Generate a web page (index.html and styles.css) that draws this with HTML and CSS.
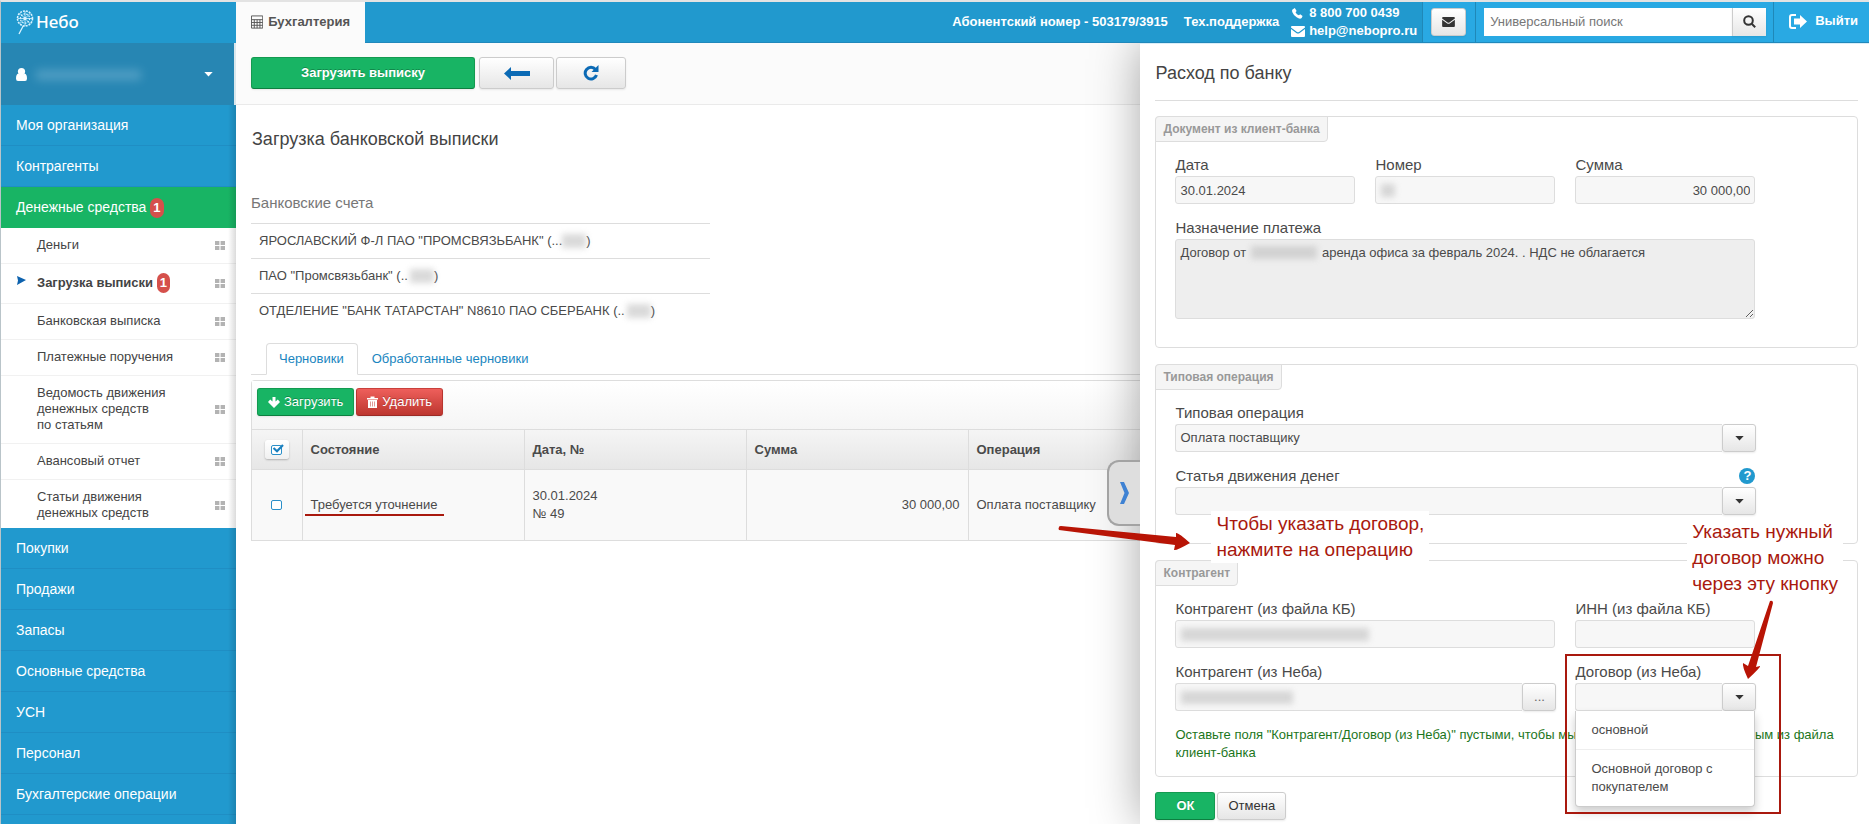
FILE: index.html
```html
<!DOCTYPE html>
<html lang="ru">
<head>
<meta charset="utf-8">
<title>Небо — Загрузка банковской выписки</title>
<link rel="stylesheet" href="styles.css">
</head>
<body>
<svg class="defs" aria-hidden="true">
  <symbol id="grid" viewBox="0 0 10 9"><path d="M0 0h4.4v4H0zM5.6 0H10v4H5.6zM0 5h4.4v4H0zM5.6 5H10v4H5.6z" fill="#b3b3b3"/></symbol>
  <symbol id="mail" viewBox="0 0 14 11"><path d="M0 1Q0 0 1 0h12q1 0 1 1v.6L8 6q-1 .7-2 0L0 1.600z M0 3l5.300 4q1.700 1.100 3.400 0L14 3v7q0 1-1 1H1q-1 0-1-1z" fill="currentColor"/></symbol>
  <symbol id="caret" viewBox="0 0 10 6"><path d="M0 0h10L5 5.500z" fill="currentColor"/></symbol>
</svg>

<header class="topbar">
  <a class="logo" href="#">
    <svg width="18" height="25" viewBox="0 0 18 25" fill="none" stroke="#d8f2ff">
      <circle cx="9" cy="8.500" r="7.500" stroke-width="1.600" stroke-dasharray="2 1"/>
      <circle cx="9" cy="8.500" r="4.600" stroke-width="1.200" stroke-dasharray="1.600 1.200"/>
      <path d="M9 1v15M1.500 8.500h15M3.700 3.200l10.600 10.600M14.300 3.200L3.700 13.800" stroke-width=".8"/>
      <circle cx="9" cy="8.500" r="1.200" fill="#d8f2ff"/>
      <path d="M7.500 15.500Q5 20 3 24" stroke-width="1.300"/>
    </svg>
    <span>Небо</span>
  </a>
  <a class="app-tab" href="#">
    <svg width="13" height="14" viewBox="0 0 13 14" fill="none" stroke="#555"><path d="M.5.5h12v13H.5zM.5 4.500h12M.5 7.500h12M.5 10.500h12M3.500 4.500v9M6.500 4.500v9M9.500 4.500v9"/></svg>
    Бухгалтерия
  </a>
  <div class="contacts">
    <span>Абонентский номер - 503179/3915</span>
    <span>Тех.поддержка</span>
    <div class="support">
      <svg width="14" height="11" viewBox="0 0 14 12"><path d="M1 1.500L3.500 0l2 3.200L4.300 4.500Q5.500 7 8 8l1.400-1.300L12 8.800 11 11q-2 1.500-5.500-.8T1 5Q0 3 1 1.500z" fill="currentColor"/></svg>
      <span>8 800 700 0439</span>
      <svg width="14" height="11"><use href="#mail"/></svg>
      <a href="#">help@nebopro.ru</a>
    </div>
  </div>
  <div class="bar-cell"><button class="btn mail-btn" aria-label="Сообщения"><svg width="14" height="10"><use href="#mail"/></svg></button></div>
  <form class="bar-cell search">
    <input type="search" placeholder="Универсальный поиск" aria-label="Универсальный поиск">
    <button type="button" class="btn" aria-label="Найти"><svg width="13" height="13" viewBox="0 0 13 13" fill="none" stroke="#333" stroke-width="2"><circle cx="5.500" cy="5.500" r="4.300"/><path d="M8.700 8.700l3.500 3.500"/></svg></button>
  </form>
  <a class="bar-cell exit" href="#">
    <svg width="18" height="15" viewBox="0 0 18 15"><path d="M7 1H3Q1 1 1 3v9q0 2 2 2h4" fill="none" stroke="currentColor" stroke-width="2"/><path d="M5 4.500h6V1l7 6.500-7 6.500v-3.500H5z" fill="currentColor"/></svg>
    Выйти
  </a>
</header>

<div class="layout">
  <nav class="sidebar">
    <button class="user">
      <svg width="11" height="13" viewBox="0 0 11 13" fill="#fff"><circle cx="5.500" cy="3.600" r="3.600"/><path d="M0 10.500Q0 6 2.500 5.500q3 2.400 6 0Q11 6 11 10.500 11 13 9 13H2Q0 13 0 10.500z"/></svg>
      <span class="user-name"></span>
      <svg width="9" height="5"><use href="#caret"/></svg>
    </button>
    <a href="#">Моя организация</a>
    <a href="#">Контрагенты</a>
    <a href="#" class="active">Денежные средства <b class="count">1</b></a>
    <ul>
      <li><a href="#">Деньги</a><svg width="10" height="9"><use href="#grid"/></svg></li>
      <li class="current"><svg class="pointer" width="9" height="9" viewBox="0 0 9 9"><path d="M0 0l9 4-9 5 1-4.500z" fill="#0d62ae"/></svg><a href="#">Загрузка выписки <b class="count">1</b></a><svg width="10" height="9"><use href="#grid"/></svg></li>
      <li><a href="#">Банковская выписка</a><svg width="10" height="9"><use href="#grid"/></svg></li>
      <li><a href="#">Платежные поручения</a><svg width="10" height="9"><use href="#grid"/></svg></li>
      <li><a href="#">Ведомость движения<br>денежных средств<br>по статьям</a><svg width="10" height="9"><use href="#grid"/></svg></li>
      <li><a href="#">Авансовый отчет</a><svg width="10" height="9"><use href="#grid"/></svg></li>
      <li><a href="#">Статьи движения<br>денежных средств</a><svg width="10" height="9"><use href="#grid"/></svg></li>
    </ul>
    <a href="#">Покупки</a>
    <a href="#">Продажи</a>
    <a href="#">Запасы</a>
    <a href="#">Основные средства</a>
    <a href="#">УСН</a>
    <a href="#">Персонал</a>
    <a href="#">Бухгалтерские операции</a>
  </nav>

  <main>
    <div class="toolbar">
      <button class="btn green load">Загрузить выписку</button>
      <button class="btn back" aria-label="Назад"><svg width="26" height="13" viewBox="0 0 26 13"><path d="M0 6.500L7 0v4h19v5H7v4z" fill="#0b6ab5"/></svg></button>
      <button class="btn reload" aria-label="Обновить"><svg width="16" height="16" viewBox="0 0 16 16"><path d="M12.500 4.500A5.800 5.800 0 1 0 13.500 10" fill="none" stroke="#0b6ab5" stroke-width="3"/><path d="M15.500 0v7H8.500z" fill="#0b6ab5"/></svg></button>
    </div>
    <div class="content">
      <h1>Загрузка банковской выписки</h1>
      <h2>Банковские счета</h2>
      <ul class="accounts">
        <li>ЯРОСЛАВСКИЙ Ф-Л ПАО "ПРОМСВЯЗЬБАНК" (...<i class="mask"></i>)</li>
        <li>ПАО "Промсвязьбанк" (..<i class="mask"></i>)</li>
        <li>ОТДЕЛЕНИЕ "БАНК ТАТАРСТАН" N8610 ПАО СБЕРБАНК (..<i class="mask"></i>)</li>
      </ul>
      <div class="tabs"><a class="selected" href="#">Черновики</a><a href="#">Обработанные черновики</a></div>
      <div class="grid-box">
        <div class="grid-tools">
          <button class="btn green"><svg width="12" height="11" viewBox="0 0 12 11"><path d="M4.500 0h3v4.500l2.300-2L12 5 6 11 0 5l2.200-2.500 2.300 2z" fill="#fff"/></svg>Загрузить</button>
          <button class="btn red"><svg width="11" height="12" viewBox="0 0 11 12"><path d="M0 2h3.500V.5h4V2H11v1.500H0z" fill="#fff"/><path d="M1 4h9v8H1z" fill="#fff"/><path d="M3.500 5.500v5M5.500 5.500v5M7.500 5.500v5" stroke="#e09a97"/></svg>Удалить</button>
        </div>
        <table>
          <thead><tr><th class="tick"><label class="tick-btn"><input type="checkbox" checked aria-label="Выбрать все"><svg class="check" width="12" height="9" viewBox="0 0 12 9"><path d="M1.500 4L5 7.200 11 1" fill="none" stroke="#1a7fbe" stroke-width="2.200"/></svg></label></th><th>Состояние</th><th>Дата, №</th><th>Сумма</th><th>Операция</th><th class="rest"></th></tr></thead>
          <tbody><tr><td class="tick"><input type="checkbox" aria-label="Выбрать строку"></td><td><span class="underlined">Требуется уточнение</span></td><td>30.01.2024<br>№ 49</td><td class="num">30 000,00</td><td>Оплата поставщику</td><td class="rest"></td></tr></tbody>
        </table>
      </div>
    </div>
  </main>

  <aside class="panel">
    <button class="collapse" aria-label="Свернуть панель"><svg width="9" height="22" viewBox="0 0 9 22"><path d="M0 0h4l5 11-5 11H0l4.500-11z" fill="#3f82d3"/></svg></button>
    <form>
      <h1>Расход по банку</h1>
      <fieldset>
        <legend>Документ из клиент-банка</legend>
        <div class="fields">
          <div class="field"><label for="date">Дата</label><input id="date" value="30.01.2024"></div>
          <div class="field"><label for="num">Номер</label><div class="masked"><input id="num"><i class="mask short"></i></div></div>
          <div class="field"><label for="sum">Сумма</label><input id="sum" class="num" value="30 000,00"></div>
          <div class="field full"><label for="purpose">Назначение платежа</label><div class="masked"><textarea id="purpose">Договор от &nbsp; &nbsp; &nbsp; &nbsp; &nbsp; &nbsp; &nbsp; &nbsp; &nbsp; &nbsp; аренда офиса за февраль 2024. . НДС не облагается</textarea><i class="mask inline"></i></div></div>
        </div>
      </fieldset>
      <fieldset>
        <legend>Типовая операция</legend>
        <div class="fields">
          <div class="field full"><label for="op">Типовая операция</label>
            <div class="combo"><select id="op"><option>Оплата поставщику</option></select><button type="button" class="btn" aria-label="Открыть список"><svg width="9" height="5"><use href="#caret"/></svg></button></div></div>
          <div class="field full"><div class="label-row"><label for="flow">Статья движения денег</label><button type="button" class="help" aria-label="Справка">?</button></div>
            <div class="combo"><select id="flow"><option></option></select><button type="button" class="btn" aria-label="Открыть список"><svg width="9" height="5"><use href="#caret"/></svg></button></div></div>
        </div>
      </fieldset>
      <fieldset class="party">
        <legend>Контрагент</legend>
        <div class="fields">
          <div class="field wide"><label for="p1">Контрагент (из файла КБ)</label><div class="masked"><input id="p1"><i class="mask long"></i></div></div>
          <div class="field"><label for="inn">ИНН (из файла КБ)</label><input id="inn"></div>
          <div class="field wide"><label for="p2">Контрагент (из Неба)</label><div class="combo masked"><input id="p2"><i class="mask medium"></i><button type="button" class="btn dots">...</button></div></div>
          <div class="field contract"><label for="contract">Договор (из Неба)</label>
            <div class="combo"><input id="contract"><button type="button" class="btn" aria-label="Открыть список"><svg width="9" height="5"><use href="#caret"/></svg></button></div>
            <ul class="menu"><li>основной</li><li>Основной договор с покупателем</li></ul>
            <div class="frame"></div>
          </div>
        </div>
        <p class="hint">Оставьте поля "Контрагент/Договор (из Неба)" пустыми, чтобы мы заполнили сведения по данным из файла клиент-банка</p>
      </fieldset>
      <div class="actions"><button type="button" class="btn green ok">ОК</button><button type="button" class="btn">Отмена</button></div>
    </form>
    <p class="note note-operation">Чтобы указать договор,<br>нажмите на операцию</p>
    <p class="note note-contract">Указать нужный<br>договор можно<br>через эту кнопку</p>
    <svg class="arrow arrow-operation" width="133" height="28" viewBox="0 0 133 28" fill="#b81405"><path d="M1 4Q0 6 1 7L117 22l-1 5q2 1 16-7Q120 9 118 10v4L3 3Q1 3 1 4z"/></svg>
    <svg class="arrow arrow-contract" width="36" height="80" viewBox="0 0 36 80" fill="#b81405"><path d="M31 1q3-1 3 2L17 67l4-1q1 1-12 13Q3 66 4 63l5 3z"/></svg>
  </aside>
</div>
</body>
</html>
```

FILE: styles.css
```css
* { box-sizing: border-box; }
body {
  margin: 0;
  height: 100vh;
  display: flex;
  flex-direction: column;
  overflow: hidden;
  border-top: 2px solid #e3e3e3;
  border-left: 1px solid #b9c4c9;
  font: 13px/18px "Liberation Sans", Arial, sans-serif;
  color: #4a4a4a;
  background: #fff;
}
.defs { position: absolute; width: 0; height: 0; }
a { color: inherit; text-decoration: none; }
ul { list-style: none; margin: 0; padding: 0; }
button, input, textarea, select { font: inherit; color: inherit; margin: 0; }
h1, h2, p { margin: 0; font-weight: normal; }
h1 { font-size: 18px; line-height: 22px; color: #444; }

.btn {
  display: inline-flex;
  align-items: center;
  justify-content: center;
  gap: 4px;
  height: 28px;
  padding: 0 10px;
  border: 1px solid #ccc;
  border-radius: 3px;
  background: linear-gradient(#fff, #e6e6e6);
  color: #333;
  box-shadow: 0 1px 2px rgba(0, 0, 0, .08);
}
.btn.green {
  background: #18b464;
  border-color: #149a50 #149a50 #0d7f40;
  color: #fff;
  text-shadow: 0 -1px 0 rgba(0, 0, 0, .25);
}
.btn.red {
  background: linear-gradient(#ee5f5b, #bd362f);
  border-color: #c9403b #b8352f #9b2a25;
  color: #fff;
  text-shadow: 0 -1px 0 rgba(0, 0, 0, .25);
}

.topbar {
  flex: none;
  display: flex;
  height: 41px;
  background: #2199ce;
  color: #fff;
  font-weight: bold;
}
.logo {
  width: 235px;
  display: flex;
  align-items: center;
  gap: 2px;
  padding: 0 0 1px 15px;
  font: 500 17px/24px "Noto Sans", "Open Sans", sans-serif;
}
.app-tab {
  display: flex;
  align-items: center;
  gap: 5px;
  width: 129px;
  padding: 0 15px 2px;
  background: #fbfbfb;
  color: #555;
}
.contacts {
  flex: 1;
  display: flex;
  justify-content: flex-end;
  align-items: center;
  gap: 16px;
  padding-right: 5px;
  border-bottom: 1px solid #2188bb;
}
.support {
  display: grid;
  grid-template-columns: 14px auto;
  column-gap: 4px;
  align-items: center;
  margin-left: -4px;
}
.bar-cell {
  display: flex;
  align-items: center;
  background: #29a9e3;
  border-left: 1px solid #1f88b8;
  border-bottom: 1px solid #2188bb;
  padding: 0 9px 1px 8px;
}
.mail-btn { width: 35px; }
.search { padding: 0 7px 1px 8px; }
.search input {
  width: 248px;
  height: 28px;
  border: 0;
  border-radius: 0;
  background: #fff;
  padding: 0 6px;
  font-weight: normal;
}
.search input::placeholder { color: #777; }
.search .btn { width: 34px; border-radius: 0; border-width: 0 0 0 1px; }
.exit { gap: 8px; padding: 0 11px 2px 15px; }

.layout { flex: 1; display: flex; min-height: 0; position: relative; }

.sidebar {
  flex: none;
  position: relative;
  width: 235px;
  background: #2199ce;
  color: #fff;
  font-size: 14px;
}
.sidebar::after {
  content: "";
  position: absolute;
  inset: 62px 0 0 auto;
  width: 8px;
  background: linear-gradient(to right, transparent, rgba(0, 0, 0, .14));
}
.user {
  display: flex;
  align-items: center;
  width: 100%;
  height: 62px;
  border: 0;
  border-right: 2px solid #dbe7ec;
  padding: 0 21px 0 15px;
  background: #2786b3;
  color: #fff;
}
.user-name {
  width: 105px;
  height: 10px;
  margin: 2px auto 0 9px;
  background: #8fc3dd;
  opacity: .4;
  filter: blur(5px);
}
.sidebar > a {
  display: block;
  height: 41px;
  padding: 0 15px;
  line-height: 40px;
  border-bottom: 1px solid #1f8ec4;
}
.sidebar > .active { background: #18b464; border-color: #18b464; }
.count {
  display: inline-block;
  padding: 0 3px;
  border-radius: 7px;
  background: #d5504b;
  color: #fff;
  font-size: 13px;
  line-height: 20px;
}
.sidebar ul { background: #fff; color: #444; font-size: 13px; line-height: 16px; }
.sidebar li {
  display: flex;
  align-items: center;
  justify-content: space-between;
  position: relative;
  padding: 9px 11px 10px 36px;
  border-bottom: 1px solid #f1f1f1;
}
.sidebar li:last-child { padding-bottom: 7px; border: 0; }
.sidebar .current { font-weight: bold; }
.pointer { position: absolute; left: 16px; top: 12px; }

main { flex: 1; min-width: 0; overflow: hidden; }
.toolbar {
  display: flex;
  gap: 2px;
  padding: 14px 15px 15px;
  background: #fbfbfb;
  border-bottom: 1px solid #eaeaea;
}
.toolbar .btn { height: 32px; }
.load { width: 224px; margin-right: 2px; font-weight: bold; }
.back { width: 75px; }
.reload { width: 70px; }
.content { padding: 23px 0 0 15px; }
.content h2 { margin: 43px 0 10px; font-size: 15px; line-height: 20px; color: #777; }
.content h1 { padding-left: 1px; }
.accounts { width: 459px; }
.accounts li { display: flex; height: 35px; padding: 8px; border-top: 1px solid #ddd; }
.mask { display: block; background: #bbb; opacity: .55; filter: blur(3px); }
.accounts .mask { width: 24px; height: 14px; margin-top: 2px; }
.accounts li + li .mask { margin-left: 2px; }
.tabs {
  display: flex;
  margin: 15px 0 5px;
  padding-left: 15px;
  height: 32px;
  border-bottom: 1px solid #ddd;
  color: #1a86c0;
}
.tabs a { padding: 6px 13px; border: 1px solid transparent; height: 32px; }
.tabs .selected { padding-left: 12px; border-color: #ddd #ddd #fff; border-radius: 4px 4px 0 0; background: #fff; }
.grid-box { border: 1px solid #ddd; border-right: 0; border-radius: 4px 0 0 0; }
.grid-tools { display: flex; gap: 2px; height: 48px; padding: 7px 5px; background: linear-gradient(#fff, #f5f5f5); }
table { width: 100%; border-collapse: collapse; table-layout: fixed; }
th, td { width: 222px; padding: 0 8px; text-align: left; border-left: 1px solid #ddd; }
th { height: 40px; border-top: 1px solid #ddd; }
thead tr { background: linear-gradient(#f5f5f5, #e6e6e6); }
td { height: 70px; border-top: 1px solid #ddd; background: #f9f9f9; }
th.tick, td.tick { width: 50px; text-align: center; border-left: 0; }
th.rest, td.rest { width: auto; border-left: 0; }
.num { text-align: right; }
input[type="checkbox"] {
  appearance: none;
  display: block;
  width: 11px;
  height: 10px;
  margin: auto;
  border: 1px solid #2a8fc9;
  border-radius: 2px;
  background: #fff;
}
.tick-btn {
  display: inline-flex;
  position: relative;
  width: 24px;
  height: 19px;
  border-radius: 3px;
  background: linear-gradient(#fff, #f0f0f0);
  box-shadow: 0 1px 2px rgba(0, 0, 0, .25);
  vertical-align: middle;
}
.check { position: absolute; left: 7px; top: 4px; }
.underlined { position: relative; }
.underlined::after {
  content: "";
  position: absolute;
  left: -6px;
  right: -7px;
  bottom: -4px;
  height: 2px;
  background: #a9190e;
}

.panel {
  position: absolute;
  top: 0;
  right: 0;
  bottom: 0;
  width: 39%;
  padding: 18px 11px 0 15px;
  background: #fff;
  border-top: 1px solid #d9eef8;
  box-shadow: 0 0 45px rgba(0, 0, 0, .35);
  clip-path: inset(0 0 0 -120px);
}
.panel h1 { padding-bottom: 16px; border-bottom: 1px solid #ddd; }
.collapse {
  display: flex;
  align-items: center;
  justify-content: center;
  position: absolute;
  left: -33px;
  top: 416px;
  width: 33px;
  height: 66px;
  padding: 0;
  border: 2px solid #a3a3a3;
  border-right: 0;
  border-radius: 12px 0 0 12px;
  background: #dedede;
}
fieldset {
  margin: 16px 0 0;
  padding: 0 19px 28px;
  min-width: 0;
  border: 1px solid #ddd;
  border-radius: 4px;
}
.panel h1 + fieldset { margin-top: 15px; }
legend {
  float: left;
  margin: -1px 0 14px -20px;
  padding: 0 7px;
  height: 26px;
  line-height: 24px;
  border: 1px solid #ddd;
  border-radius: 4px 0 4px 0;
  background: #f5f5f5;
  color: #999;
  font-size: 12px;
  font-weight: bold;
}
.fields {
  clear: both;
  display: grid;
  grid-template-columns: repeat(3, 1fr);
  gap: 15px 20px;
  max-width: 580px;
}
.field { position: relative; min-width: 0; }
.full { grid-column: span 3; }
.wide { grid-column: span 2; }
.field label { display: block; padding-bottom: 2px; font-size: 15px; line-height: 18px; }
.field input, .field select, .field textarea {
  display: block;
  width: 100%;
  height: 28px;
  padding: 0 4px;
  border: 1px solid #ddd;
  border-radius: 3px;
  background: #f7f7f7;
  outline: 0;
}
.field select { appearance: none; }
.field textarea { height: 80px; padding: 4px; background: #eee; line-height: 18px; resize: vertical; }
.masked { position: relative; }
.masked .mask { position: absolute; left: 6px; top: 8px; height: 13px; }
.short { width: 14px; }
.masked .inline { left: 76px; top: 7px; width: 66px; }
.long { width: 188px; }
.medium { width: 112px; }
.combo { display: flex; margin-right: -1px; }
.combo input, .combo select { flex: 1; min-width: 0; border-right: 0; border-radius: 3px 0 0 3px; }
.combo .btn { width: 34px; padding: 0; }
.combo .dots { color: #666; }
.label-row { display: flex; justify-content: space-between; }
.help {
  width: 16px;
  height: 16px;
  margin-top: 1px;
  padding: 0;
  border: 0;
  border-radius: 8px;
  background: #2199ce;
  color: #fff;
  font-weight: bold;
  line-height: 16px;
}
.menu {
  position: absolute;
  z-index: 2;
  left: 0;
  right: 0;
  top: 48px;
  background: #fff;
  border: 1px solid #ccc;
  border-top: 0;
  border-radius: 0 0 4px 4px;
  box-shadow: 0 5px 10px rgba(0, 0, 0, .2);
}
.menu li { padding: 10px 15px; }
.menu li + li { border-top: 1px solid #eee; }
.frame {
  position: absolute;
  z-index: 3;
  left: -10px;
  right: -26px;
  top: -9px;
  height: 160px;
  border: 2px solid #a9190e;
}
.party { padding-bottom: 14px; }
.hint { margin-top: 15px; color: #1c761c; }
.actions { display: flex; gap: 2px; padding-top: 15px; }
.ok { width: 60px; font-weight: bold; }

.note {
  position: absolute;
  padding: 0 5px;
  background: #fff;
  color: #a9190e;
  font-size: 19px;
  line-height: 26px;
  white-space: nowrap;
}
.note-operation { left: 71px; top: 467px; }
.note-contract { right: 26px; top: 475px; }
.arrow { position: absolute; z-index: 4; }
.arrow-operation { left: -82px; top: 479px; }
.arrow-contract { right: 94px; top: 556px; }
```
